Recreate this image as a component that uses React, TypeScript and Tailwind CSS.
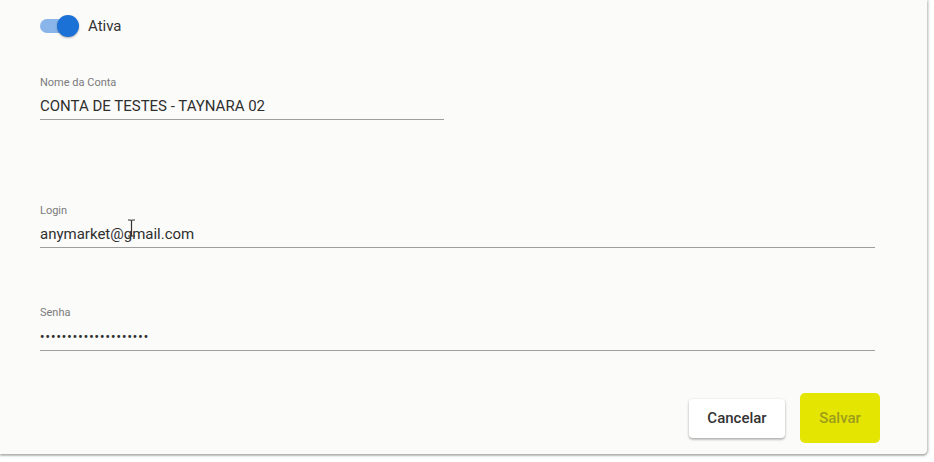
import React from 'react';

const Field: React.FC<{ label: string; value: React.ReactNode; width: string; className?: string }> = ({
  label,
  value,
  width,
  className,
}) => (
  <div className={`${width} ${className ?? ''}`}>
    <div className="text-[11px] leading-[14px] text-[#7a7a7a]">{label}</div>
    <div className="mt-[6px] border-b border-[#9e9e9e] pb-[3px] text-[15px] leading-[20px] text-[#2f2f2f]">
      {value}
    </div>
  </div>
);

export default function App() {
  return (
    <div className="w-[934px] h-[462px] bg-white overflow-hidden" style={{ fontFamily: 'Roboto, "Liberation Sans", sans-serif' }}>
      <div className="relative w-[927px] h-[454px] bg-[#fbfbfa] rounded-br-[4px] shadow-[0_2px_2px_rgba(0,0,0,0.28),2px_0_2px_rgba(0,0,0,0.14)] pl-[40px] pt-[15px]">
        {/* Toggle */}
        <div className="flex items-center gap-[9px] h-[22px]">
          <div className="relative w-[39px] h-[22px]">
            <div className="absolute left-0 top-[4px] w-[36px] h-[14px] rounded-full bg-[#8ab5ea]" />
            <div className="absolute right-0 top-0 w-[22px] h-[22px] rounded-full bg-[#1b71d6] shadow-[0_1px_2px_rgba(0,0,0,0.3)]" />
          </div>
          <span className="text-[15px] text-[#333]">Ativa</span>
        </div>

        <Field label="Nome da Conta" value="CONTA DE TESTES - TAYNARA 02" width="w-[404px]" className="mt-[39px]" />

        <div className="relative">
          <Field label="Login" value="anymarket@gmail.com" width="w-[835px]" className="mt-[84px]" />
          {/* mouse I-beam cursor */}
          <svg className="absolute left-[87px] top-[15px]" width="9" height="18" viewBox="0 0 9 18">
            <path d="M1 1h2.5c.6 0 1 .4 1 1v14c0 .6-.4 1-1 1H1M8 1H5.5c-.6 0-1 .4-1 1M8 17H5.5c-.6 0-1-.4-1-1" fill="none" stroke="#333" strokeWidth="1.2" />
          </svg>
        </div>

        <Field
          label="Senha"
          value={<span className="text-[12px] tracking-[1.15px] font-bold">••••••••••••••••••••</span>}
          width="w-[835px]"
          className="mt-[58px]"
        />

        <div className="flex justify-end items-center gap-[15px] mt-[42px] pr-[47px]">
          <button className="w-[96px] h-[39px] rounded-[4px] bg-white text-[15px] font-medium text-[#333] shadow-[0_1px_3px_rgba(0,0,0,0.25),0_2px_2px_rgba(0,0,0,0.12)]">
            Cancelar
          </button>
          <button className="w-[80px] h-[50px] rounded-[5px] bg-[#e4e500] text-[15px] font-medium text-[#9d9d1c]">
            Salvar
          </button>
        </div>
      </div>
    </div>
  );
}
